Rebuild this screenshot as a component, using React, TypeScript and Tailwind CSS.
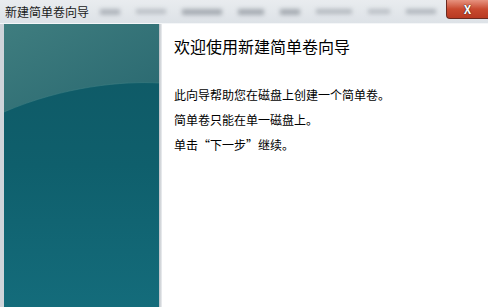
export default function App() {
  return (
    <div className="w-[488px] h-[307px] overflow-hidden flex flex-col bg-[#dfe4ea] font-['Noto_Sans_CJK_SC',sans-serif]">
      {/* title bar */}
      <div className="relative h-[23px] shrink-0 flex items-center bg-gradient-to-b from-[#e9ecef] to-[#dde2e7]">
        <div className="absolute inset-0 flex items-center gap-4 pl-[100px] blur-[2px] opacity-70">
          <div className="w-[20px] h-[6px] bg-[#9aa0a8]" />
          <div className="w-[30px] h-[5px] bg-[#a9afb6]" />
          <div className="w-[40px] h-[6px] bg-[#8d939b]" />
          <div className="w-[26px] h-[6px] bg-[#8d939b]" />
          <div className="w-[20px] h-[6px] bg-[#8d939b]" />
          <div className="w-[36px] h-[5px] bg-[#a0a6ad]" />
          <div className="w-[22px] h-[5px] bg-[#a9afb6]" />
          <div className="w-[30px] h-[5px] bg-[#9aa0a8]" />
        </div>
        <span className="relative pl-[5px] text-[12px] leading-none text-[#1a1a1a]">
          新建简单卷向导
        </span>
        <div className="absolute right-0 top-0 w-[42px] h-[19px] rounded-bl-[4px] border border-t-0 border-r-0 border-[#6b2a20] bg-gradient-to-b from-[#e6927f] via-[#c94a30] to-[#b83a22] flex items-center justify-center">
          <span className="text-[12px] leading-none font-bold text-white [text-shadow:0_0_1px_#3a1a14,0_0_1px_#3a1a14]">
            X
          </span>
        </div>
      </div>
      <div className="h-[1px] bg-[#f4f6f8] shrink-0" />
      {/* body */}
      <div className="flex flex-1 pl-[4px] bg-gradient-to-r from-[#cfd4da] to-[#e6e9ec]">
        <div className="relative w-[155px] h-full overflow-hidden bg-gradient-to-b from-[#0f5864] via-[#0f5f6c] to-[#146c7b]">
          <svg className="absolute inset-0" width="155" height="284" viewBox="0 0 155 284">
            <defs>
              <linearGradient id="top" x1="0" y1="0" x2="1" y2="1">
                <stop offset="0" stopColor="#3f7d7f" />
                <stop offset="1" stopColor="#296870" />
              </linearGradient>
            </defs>
            <path d="M0 0 H155 V59 C120 57 60 62 0 88 Z" fill="url(#top)" />
            <path d="M0 88 C60 62 120 57 155 59" fill="none" stroke="#4a8688" strokeWidth="0.8" opacity="0.6" />
          </svg>
        </div>
        <div className="w-[3px] h-full bg-gradient-to-r from-[#b9bec4] to-[#eef0f2]" />
        <div className="flex-1 bg-white pl-[12px] pt-[13px] text-black">
          <div className="text-[16px] leading-[18px]">欢迎使用新建简单卷向导</div>
          <div className="mt-[34px] flex flex-col gap-[13px] text-[12px] leading-[12px]">
            <div>此向导帮助您在磁盘上创建一个简单卷。</div>
            <div>简单卷只能在单一磁盘上。</div>
            <div>单击“下一步”继续。</div>
          </div>
        </div>
      </div>
    </div>
  );
}
